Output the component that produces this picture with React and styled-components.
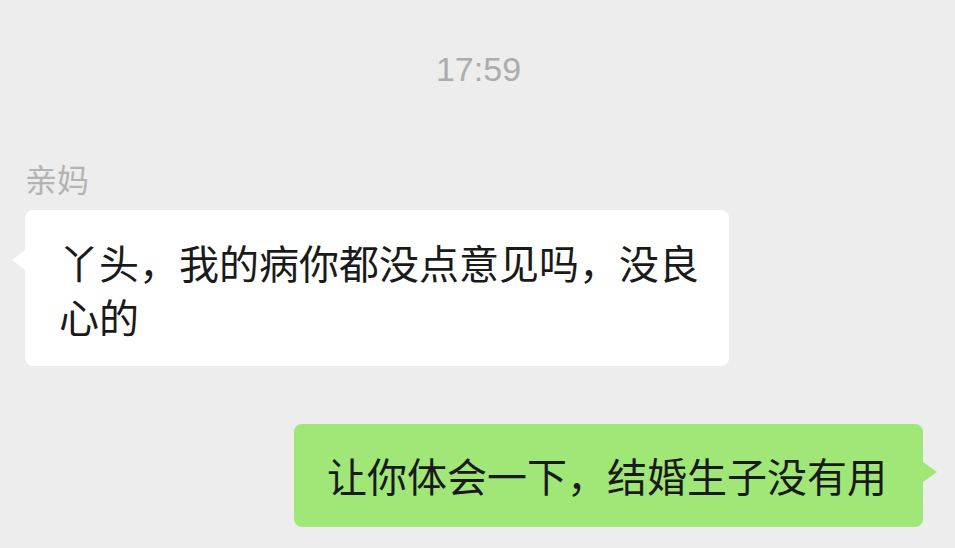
import React from "react";
import styled, { createGlobalStyle } from "styled-components";

const GlobalStyle = createGlobalStyle`
  html, body {
    margin: 0;
    padding: 0;
    background: #ededed;
  }
  body {
    font-family: "Noto Sans CJK SC", "Noto Sans", sans-serif;
  }
`;

const messages = [
  {
    id: 1,
    mine: false,
    name: "亲妈",
    text: "丫头，我的病你都没点意见吗，没良心的",
  },
  {
    id: 2,
    mine: true,
    text: "让你体会一下，结婚生子没有用",
  },
];

const App = () => {
  return (
    <>
      <GlobalStyle />
      <Chat>
        <Time>17:59</Time>
        {messages.map((msg) => (
          <Row key={msg.id} $mine={msg.mine}>
            {msg.name && <Name>{msg.name}</Name>}
            <Bubble $mine={msg.mine}>{msg.text}</Bubble>
          </Row>
        ))}
      </Chat>
    </>
  );
};

const Chat = styled.main`
  width: 955px;
  height: 548px;
  overflow: hidden;
  display: flex;
  flex-direction: column;
  padding-top: 49px;
  box-sizing: border-box;
`;

const Time = styled.div`
  align-self: center;
  font-family: "Liberation Sans", Arial, sans-serif;
  font-size: 34px;
  line-height: 40px;
  color: #acacac;
  padding-left: 2px;
`;

const Row = styled.section`
  display: flex;
  flex-direction: column;
  align-items: ${(p) => (p.$mine ? "flex-end" : "flex-start")};
  padding: ${(p) => (p.$mine ? "58px 32px 0 0" : "71px 0 0 25px")};
`;

const Name = styled.div`
  font-size: 32px;
  line-height: 36px;
  color: #b3b3b3;
  margin-bottom: 14px;
`;

const Bubble = styled.div`
  position: relative;
  box-sizing: border-box;
  max-width: ${(p) => (p.$mine ? "none" : "704px")};
  padding: ${(p) => (p.$mine ? "24px 36px 25px 33px" : "25px 28px 23px 34px")};
  background: ${(p) => (p.$mine ? "#a0e778" : "#ffffff")};
  border-radius: 8px;
  font-size: 40px;
  line-height: 54px;
  color: #1a1a1a;
  white-space: ${(p) => (p.$mine ? "nowrap" : "normal")};

  &::before {
    content: "";
    position: absolute;
    top: ${(p) => (p.$mine ? "38px" : "40px")};
    ${(p) => (p.$mine ? "right: -14px;" : "left: -13px;")}
    border-top: 10px solid transparent;
    border-bottom: 10px solid transparent;
    ${(p) =>
      p.$mine
        ? "border-left: 14px solid #a0e778;"
        : "border-right: 13px solid #ffffff;"}
  }
`;

export default App;
